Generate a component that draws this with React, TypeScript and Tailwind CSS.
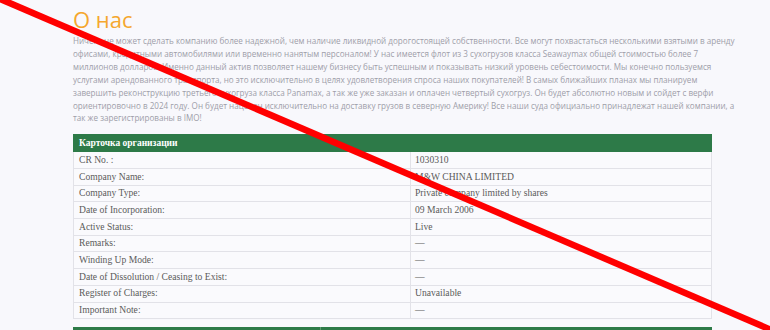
const rows: [string, string][] = [
  ["CR No. :", "1030310"],
  ["Company Name:", "M&W CHINA LIMITED"],
  ["Company Type:", "Private company limited by shares"],
  ["Date of Incorporation:", "09 March 2006"],
  ["Active Status:", "Live"],
  ["Remarks:", "—"],
  ["Winding Up Mode:", "—"],
  ["Date of Dissolution / Ceasing to Exist:", "—"],
  ["Register of Charges:", "Unavailable"],
  ["Important Note:", "—"],
];

const lines = [
  "Ничего не может сделать компанию более надежной, чем наличие ликвидной дорогостоящей собственности. Все могут похвастаться несколькими взятыми в аренду",
  "офисами, кредитными автомобилями или временно нанятым персоналом! У нас имеется флот из 3 сухогрузов класса Seawaymax общей стоимостью более 7",
  "миллионов долларов. Именно данный актив позволяет нашему бизнесу быть успешным и показывать низкий уровень себестоимости. Мы конечно пользуемся",
  "услугами арендованного транспорта, но это исключительно в целях удовлетворения спроса наших покупателей! В самых ближайших планах мы планируем",
  "завершить реконструкцию третьего сухогруза класса Panamax, а так же уже заказан и оплачен четвертый сухогруз. Он будет абсолютно новым и сойдет с верфи",
  "ориентировочно в 2024 году. Он будет нацелен исключительно на доставку грузов в северную Америку! Все наши суда официально принадлежат нашей компании, а",
  "так же зарегистрированы в IMO!",
];

export default function App() {
  return (
    <div className="relative h-[330px] w-[770px] overflow-hidden bg-[#f8f8fc]">
      <div className="w-[712px] pl-[73px] pt-[4px]">
        <h1 className="font-['Open_Sans',sans-serif] text-[22px] leading-[30px] text-[#f5a72e]">О нас</h1>

        <p className="mt-[1px] font-['Open_Sans',sans-serif] text-[8.1px] leading-[12.9px] text-[#9e9ea9]">
          {lines.map((l, i) => (
            <span key={i} className="block whitespace-nowrap">{l}</span>
          ))}
        </p>

        <table className="mt-[9px] w-full border-collapse font-['Liberation_Serif',serif] text-[9.6px] text-[#5a5a5a]">
          <thead>
            <tr className="h-[17px] bg-[#2d7a48]">
              <th colSpan={2} className="border border-[#2d7a48] px-[5px] text-left font-['Liberation_Serif',serif] text-[9.5px] font-bold text-white">
                Карточка организации
              </th>
            </tr>
          </thead>
          <tbody>
            {rows.map(([k, v]) => (
              <tr key={k} className="h-[16.7px] bg-[#fafafd]">
                <td className="w-[337px] border border-[#e2e2e8] px-[5px]">{k}</td>
                <td className="border border-[#e2e2e8] px-[4px]">{v}</td>
              </tr>
            ))}
          </tbody>
        </table>

        <div className="mt-[8px] flex h-[17px] bg-[#2d7a48]">
          <div className="w-[248px] border-r border-[#5f9c72]" />
          <div className="flex-1" />
        </div>
      </div>

      <svg className="pointer-events-none absolute inset-0" width="770" height="330" viewBox="0 0 770 330">
        <line x1="-2" y1="-2" x2="776" y2="332" stroke="#ff0000" strokeWidth="6.5" />
      </svg>
    </div>
  );
}
